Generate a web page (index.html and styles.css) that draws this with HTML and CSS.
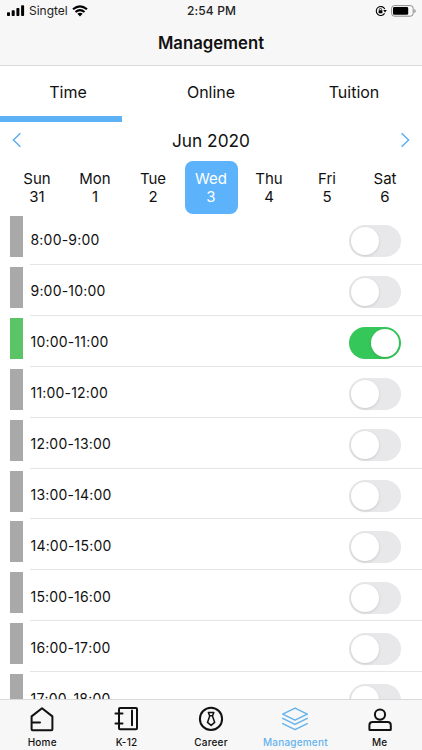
FILE: index.html
```
<!DOCTYPE html>
<html lang="en">
<head>
<meta charset="utf-8">
<title>Management</title>
<link rel="stylesheet" href="styles.css">
</head>
<body>
<div class="app">
  <header class="top">
    <div class="status">
      <div class="carrier">
        <svg class="signal" width="18" height="12" viewBox="0 0 18 12"><rect x="0" y="7.3" width="3" height="3.7" rx=".8"/><rect x="4.7" y="5.3" width="3" height="5.7" rx=".8"/><rect x="9.4" y="3" width="3" height="8" rx=".8"/><rect x="14.1" y=".3" width="3" height="10.7" rx=".8"/></svg>
        <span class="network">Singtel</span>
        <svg class="wifi" width="16" height="12" viewBox="0 0 16 12"><g fill="none" stroke="#000" stroke-width="2.1"><path d="M1 4.3Q8-1.7 15 4.3"/><path d="M3.5 7Q8 3.1 12.5 7"/></g><path d="M5.4 8.8Q8 6.9 10.6 8.8L8 11.5z"/></svg>
      </div>
      <span class="clock">2:54 PM</span>
      <div class="power">
        <svg width="12" height="12" viewBox="0 0 12 12"><path d="M9.8 4A4.5 4.5 0 1 0 9.6 8.4" fill="none" stroke="#000" stroke-width="1.1"/><path d="M8.2 5.1h3.6L10.1 7.5z"/><rect x="3.6" y="5.2" width="3.8" height="3.1" rx=".4"/><path d="M4.4 5.3V4.5a1.1 1.1 0 0 1 2.2 0v.8" fill="none" stroke="#000" stroke-width=".8"/></svg>
        <svg width="25" height="12" viewBox="0 0 25 12"><rect x=".6" y=".6" width="21.6" height="10.6" rx="2.8" fill="none" stroke="#8c8c8c"/><rect x="2" y="2" width="15.2" height="7.8" rx="1.4"/><path d="M23.3 4v4q1.4-.5 1.4-2t-1.4-2" fill="#8c8c8c"/></svg>
      </div>
    </div>
    <h1>Management</h1>
  </header>
  <nav class="tabs"><span class="tab active">Time</span><span class="tab">Online</span><span class="tab">Tuition</span></nav>
  <div class="month">
    <svg width="10" height="16" viewBox="0 0 10 16"><path d="M8.4 1.2 1.4 8l7 6.8"/></svg>
    <span>Jun 2020</span>
    <svg width="10" height="16" viewBox="0 0 10 16"><path d="M1.6 1.2l7 6.8-7 6.8"/></svg>
  </div>
  <div class="week">
    <div class="day">Sun<b>31</b></div><div class="day">Mon<b>1</b></div><div class="day">Tue<b>2</b></div><div class="day selected">Wed<b>3</b></div><div class="day">Thu<b>4</b></div><div class="day">Fri<b>5</b></div><div class="day">Sat<b>6</b></div>
  </div>
  <main class="slots">
    <div class="slot"><i class="bar"></i><div class="line"><span>8:00-9:00</span><i class="toggle"></i></div></div>
    <div class="slot"><i class="bar"></i><div class="line"><span>9:00-10:00</span><i class="toggle"></i></div></div>
    <div class="slot on"><i class="bar"></i><div class="line"><span>10:00-11:00</span><i class="toggle"></i></div></div>
    <div class="slot"><i class="bar"></i><div class="line"><span>11:00-12:00</span><i class="toggle"></i></div></div>
    <div class="slot"><i class="bar"></i><div class="line"><span>12:00-13:00</span><i class="toggle"></i></div></div>
    <div class="slot"><i class="bar"></i><div class="line"><span>13:00-14:00</span><i class="toggle"></i></div></div>
    <div class="slot"><i class="bar"></i><div class="line"><span>14:00-15:00</span><i class="toggle"></i></div></div>
    <div class="slot"><i class="bar"></i><div class="line"><span>15:00-16:00</span><i class="toggle"></i></div></div>
    <div class="slot"><i class="bar"></i><div class="line"><span>16:00-17:00</span><i class="toggle"></i></div></div>
    <div class="slot"><i class="bar"></i><div class="line"><span>17:00-18:00</span><i class="toggle"></i></div></div>
  </main>
  <nav class="dock">
    <div class="item"><svg viewBox="0 0 28 26"><path d="M3.6 23.2V10.4L14 2.2l10.4 8.2v12.8q0 1-1 1H4.6q-1 0-1-1zM4 16.5h8"/></svg>Home</div>
    <div class="item"><svg viewBox="0 0 28 26"><path d="M7 1.9h16q1 0 1 1v19.4q0 1-1 1H7q-1 0-1-1V2.9q0-1 1-1zM2.5 7.4h7M2.5 17.4h7M19 4.5v14.8"/></svg>K-12</div>
    <div class="item"><svg viewBox="0 0 28 26"><circle cx="14" cy="12.9" r="11.1"/><path class="fine" d="M11.4 6.5h5.4l-1.2 3.2h-3zM12.8 9.8l-2.3 6.6 3.6 3 3.6-3-2.3-6.6z"/></svg>Career</div>
    <div class="item current"><svg viewBox="0 0 28 26"><path class="fine" d="M14 2.2l12.3 6-12.3 6-12.3-6zM1.7 12.4l12.3 6 12.3-6M1.7 17.6l12.3 6 12.3-6"/></svg>Management</div>
    <div class="item"><svg viewBox="0 0 28 26"><circle cx="14" cy="8.6" r="5.1"/><path d="M3.4 23.5v-4.3q0-3.2 3.2-3.2h15q3.2 0 3.2 3.2v4.3q0 .6-.6.6H4q-.6 0-.6-.6z"/></svg>Me</div>
  </nav>
</div>
</body>
</html>
```
FILE: styles.css
```
* { box-sizing: border-box; }
body { margin: 0; font-family: Inter, "Liberation Sans", sans-serif; color: #111; background: #fff; }
.app { width: 422px; height: 750px; display: flex; flex-direction: column; overflow: hidden; }
svg { display: block; }
.top { height: 66px; flex: none; background: #f7f7f7; border-bottom: 1px solid #dadada; }
.status { height: 21px; display: grid; grid-template-columns: 1fr auto 1fr; align-items: center; padding: 0 6px 0 7px; color: #222; }
.carrier { display: flex; align-items: center; }
.network { font-size: 12px; margin: 0 4px 0 4px; }
.clock { font-size: 12px; font-weight: 500; letter-spacing: .15px; }
.power { display: flex; gap: 4px; justify-content: flex-end; }
h1 { margin: 0; line-height: 44px; text-align: center; font-size: 16.7px; font-weight: 600; }
.tabs { height: 56px; flex: none; display: grid; grid-template-columns: 122px 1fr 122px; grid-template-rows: 56px; font-size: 16px; text-align: center; line-height: 52px; }
.tab:first-child { padding-left: 14px; }
.tab:last-child { padding-right: 14px; }
.active { border-bottom: 6px solid #5db2f5; }
.month { height: 37px; flex: none; display: flex; justify-content: space-between; align-items: center; padding: 0 12px 1px; font-size: 17.3px; }
.month svg { fill: none; stroke: #5aaaf0; stroke-width: 1.4; }
.week { height: 55px; flex: none; display: grid; grid-template-columns: repeat(7, 58px); padding: 2px 8px 0; }
.day { height: 53px; width: 53px; margin: 0 auto; padding-top: 9px; border-radius: 8px; text-align: center; font-size: 15px; line-height: 18px; }
.day b { display: block; font-weight: 400; }
.selected { background: #5cb3fb; color: #fff; }
.slots { flex: 1; min-height: 0; overflow: hidden; }
.slot { height: 50.92px; display: flex; padding-left: 10px; }
.bar { width: 13px; height: 41px; margin: 2px 7px 0 0; background: #a9a9a9; }
.on .bar { background: #5bc467; }
.line { flex: 1; display: flex; justify-content: space-between; align-items: center; border-bottom: 1px solid #e5e5e5; padding: 2px 21.5px 0 .5px; font-size: 14px; letter-spacing: .2px; font-kerning: none; }
.toggle { width: 52px; height: 32px; margin-top: 3px; border-radius: 16px; padding: 2px; background: #e8e8ea; display: flex; }
.toggle::before { content: ""; width: 28px; height: 28px; border-radius: 50%; background: #fff; box-shadow: 0 1px 3px #0002; }
.on .toggle { background: #35c759; justify-content: flex-end; }
.dock { height: 51px; flex: none; display: grid; grid-template-columns: repeat(5, 84.4px); background: #f7f7f7; border-top: 1px solid #d9d9d9; }
.item { display: flex; flex-direction: column; align-items: center; padding-top: 6px; font-size: 10px; font-weight: 500; line-height: 21px; letter-spacing: .2px; }
.item svg { width: 28px; height: 26px; fill: none; stroke: #111; stroke-width: 2; stroke-linejoin: round; stroke-linecap: round; }
.item .fine { stroke-width: 1.5; }
.current { color: #65b3ec; }
.current svg { stroke: #65b3ec; }
```
